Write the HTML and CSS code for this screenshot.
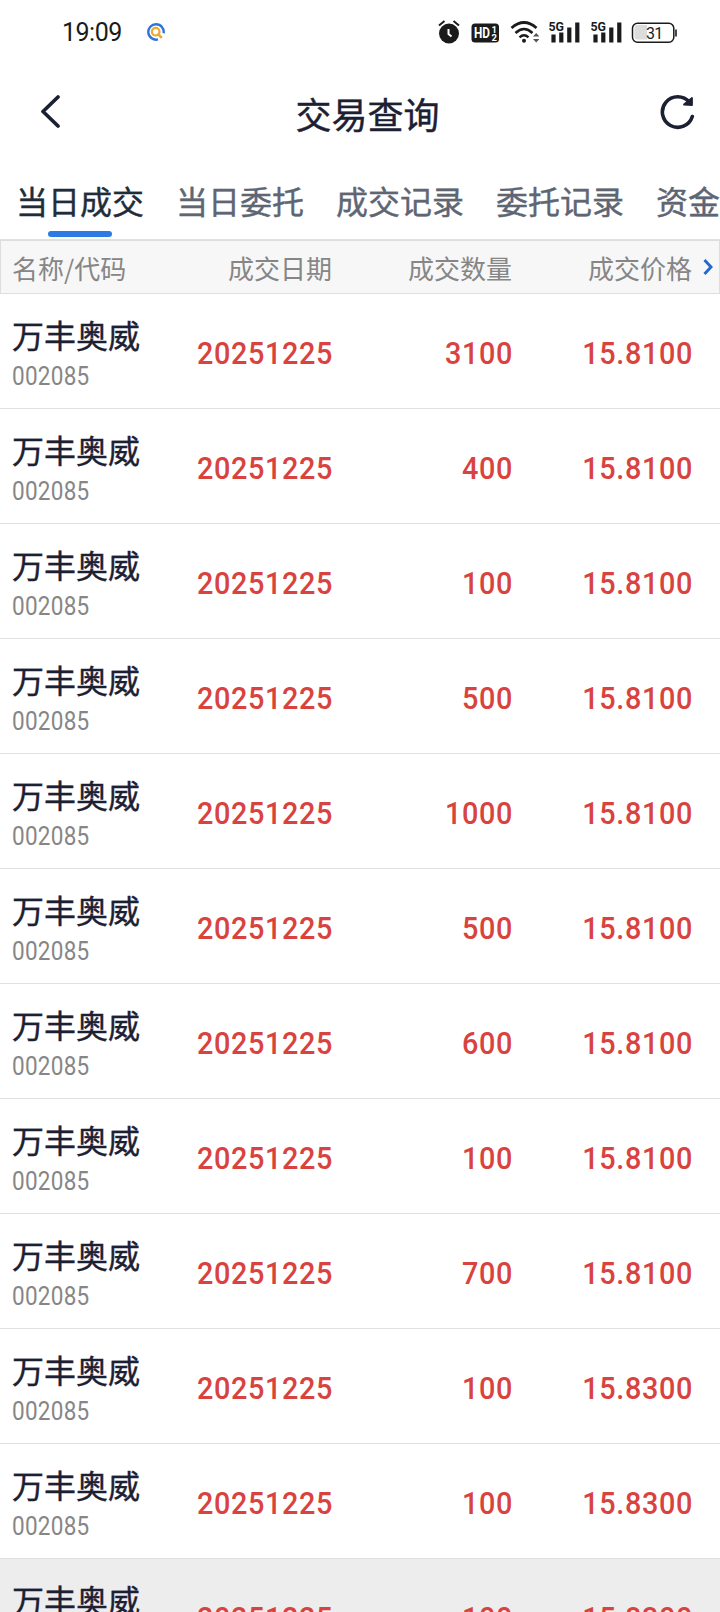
FILE: index.html
```html
<!DOCTYPE html>
<html lang="zh-CN">
<head>
    <meta charset="UTF-8">
    <meta name="viewport" content="width=device-width, initial-scale=1.0">
    <title>交易查询</title>
    <link rel="stylesheet" href="styles.css">
</head>
<body>
    <div class="status-bar">
        <div class="clock">19:09</div>
        <svg class="app-icon" width="18" height="18" viewBox="0 0 18 18" fill="none">
            <path d="M16.6 10.2A7.7 7.7 0 1 0 11 16.4" stroke="#2a74dc" stroke-width="2.4"/>
            <circle cx="8.7" cy="8.7" r="3.8" stroke="#eda932" stroke-width="2.2"/>
            <path d="M10.5 10.5L14.8 14.8" stroke="#eda932" stroke-width="2.6"/>
        </svg>
        <div class="status-icons">
            <svg width="260" height="32" viewBox="0 0 260 32" fill="none">
                <!-- alarm -->
                <circle cx="20" cy="17.5" r="10" fill="#1b1b1b"/>
                <path d="M10 9.5L15.5 5M24.5 5L30 9.5" stroke="#1b1b1b" stroke-width="2"/>
                <path d="M19.5 13V18L22.5 20.5" stroke="#fff" stroke-width="2"/>
                <!-- HD badge -->
                <rect x="42.5" y="7.5" width="27.5" height="19" rx="3.5" fill="#1b1b1b"/>
                <text class="hd" x="45" y="22.3" textLength="16" lengthAdjust="spacingAndGlyphs">HD</text>
                <text class="hd-small" x="62.5" y="16.5">1</text>
                <text class="hd-small" x="62.5" y="25">2</text>
                <!-- wifi -->
                <path d="M82.5 12Q95 1 107.5 12" stroke="#1b1b1b" stroke-width="2.8"/>
                <path d="M86.5 17Q95 9 103.5 17" stroke="#1b1b1b" stroke-width="2.6"/>
                <path d="M90.5 21.3Q95 17.3 99.5 21.3" stroke="#1b1b1b" stroke-width="2.4"/>
                <circle cx="95" cy="24.8" r="2" fill="#1b1b1b"/>
                <path d="M104 20.5L107.2 17L110.4 20.5ZM104 23L107.2 26.5L110.4 23Z" fill="#555"/>
                <!-- signal 1 -->
                <text class="net" x="119.5" y="14.5" textLength="15.5" lengthAdjust="spacingAndGlyphs">5G</text>
                <path d="M124.5 18.5V26.5M132.3 16.5V26.5M140.3 11.5V26.5M148.3 6.5V26.5" stroke="#1b1b1b" stroke-width="4.2"/>
                <!-- signal 2 -->
                <text class="net" x="161.5" y="14.5" textLength="15.5" lengthAdjust="spacingAndGlyphs">5G</text>
                <path d="M166.5 18.5V26.5M174.3 16.5V26.5M182.3 11.5V26.5M190.3 6.5V26.5" stroke="#1b1b1b" stroke-width="4.2"/>
                <!-- battery -->
                <path d="M208 9H218V23.5H208Q205.5 23.5 205.5 20.5V12Q205.5 9 208 9Z" fill="#dcdcdc"/>
                <rect x="203.5" y="7.2" width="41.3" height="19" rx="5" stroke="#1b1b1b" stroke-width="1.5"/>
                <path d="M247 13.5V20.5" stroke="#1b1b1b" stroke-width="1.6"/>
                <text class="battery" x="217" y="22.5">31</text>
            </svg>
        </div>
    </div>

    <div class="header">
        <svg class="back" width="20" height="34" viewBox="0 0 20 34" fill="none">
            <path d="M17 2L2 16.5L17 31" stroke="#1c2033" stroke-width="3.7" stroke-linecap="round" stroke-linejoin="round"/>
        </svg>
        <h1>交易查询</h1>
        <svg class="refresh" width="36" height="36" viewBox="0 0 36 36" fill="none">
            <path d="M32.3 22.5A15.3 15.3 0 1 1 29.5 8.3" stroke="#1c2033" stroke-width="3.6" stroke-linecap="round"/>
            <path d="M32 4V11L24 10.5Z" fill="#1c2033" stroke="#1c2033" stroke-width="1.8" stroke-linejoin="round"/>
        </svg>
    </div>

    <div class="tabs">
        <div class="tab active">当日成交</div>
        <div class="tab">当日委托</div>
        <div class="tab">成交记录</div>
        <div class="tab">委托记录</div>
        <div class="tab">资金</div>
    </div>

    <div class="table-head">
        <div>名称/代码</div>
        <div>成交日期</div>
        <div>成交数量</div>
        <div>成交价格</div>
        <svg class="more" width="11" height="18" viewBox="0 0 11 18" fill="none">
            <path d="M1.5 2L8 9L1.5 16" stroke="#2168cf" stroke-width="2.9"/>
        </svg>
    </div>

    <div class="list">
        <div class="row">
            <div class="stock"><div class="name">万丰奥威</div><div class="code">002085</div></div>
            <div class="num">20251225</div>
            <div class="num">3100</div>
            <div class="num">15.8100</div>
        </div>
        <div class="row">
            <div class="stock"><div class="name">万丰奥威</div><div class="code">002085</div></div>
            <div class="num">20251225</div>
            <div class="num">400</div>
            <div class="num">15.8100</div>
        </div>
        <div class="row">
            <div class="stock"><div class="name">万丰奥威</div><div class="code">002085</div></div>
            <div class="num">20251225</div>
            <div class="num">100</div>
            <div class="num">15.8100</div>
        </div>
        <div class="row">
            <div class="stock"><div class="name">万丰奥威</div><div class="code">002085</div></div>
            <div class="num">20251225</div>
            <div class="num">500</div>
            <div class="num">15.8100</div>
        </div>
        <div class="row">
            <div class="stock"><div class="name">万丰奥威</div><div class="code">002085</div></div>
            <div class="num">20251225</div>
            <div class="num">1000</div>
            <div class="num">15.8100</div>
        </div>
        <div class="row">
            <div class="stock"><div class="name">万丰奥威</div><div class="code">002085</div></div>
            <div class="num">20251225</div>
            <div class="num">500</div>
            <div class="num">15.8100</div>
        </div>
        <div class="row">
            <div class="stock"><div class="name">万丰奥威</div><div class="code">002085</div></div>
            <div class="num">20251225</div>
            <div class="num">600</div>
            <div class="num">15.8100</div>
        </div>
        <div class="row">
            <div class="stock"><div class="name">万丰奥威</div><div class="code">002085</div></div>
            <div class="num">20251225</div>
            <div class="num">100</div>
            <div class="num">15.8100</div>
        </div>
        <div class="row">
            <div class="stock"><div class="name">万丰奥威</div><div class="code">002085</div></div>
            <div class="num">20251225</div>
            <div class="num">700</div>
            <div class="num">15.8100</div>
        </div>
        <div class="row">
            <div class="stock"><div class="name">万丰奥威</div><div class="code">002085</div></div>
            <div class="num">20251225</div>
            <div class="num">100</div>
            <div class="num">15.8300</div>
        </div>
        <div class="row">
            <div class="stock"><div class="name">万丰奥威</div><div class="code">002085</div></div>
            <div class="num">20251225</div>
            <div class="num">100</div>
            <div class="num">15.8300</div>
        </div>
        <div class="row pressed">
            <div class="stock"><div class="name">万丰奥威</div><div class="code">002085</div></div>
            <div class="num">20251225</div>
            <div class="num">100</div>
            <div class="num">15.8300</div>
        </div>
    </div>
</body>
</html>
```
FILE: styles.css
```css
* {
    box-sizing: border-box;
}
body {
    margin: 0;
    width: 720px;
    height: 1612px;
    overflow: hidden;
    background-color: #fff;
    color: #1c2033;
    font-family: "Noto Sans CJK SC", sans-serif;
}
.status-bar {
    height: 64px;
    display: flex;
    align-items: center;
    padding-left: 62px;
}
.clock {
    width: 85px;
    padding-top: 2px;
    font-family: Roboto, sans-serif;
    font-size: 25px;
    line-height: 30px;
    letter-spacing: -0.5px;
    color: #1b1b1b;
}
.status-icons {
    margin-left: 264px;
    height: 32px;
}
.status-icons text {
    font-family: Roboto, sans-serif;
    fill: #1b1b1b;
}
.status-icons .hd {
    font-size: 15px;
    font-weight: bold;
    fill: #fff;
}
.status-icons .hd-small {
    font-size: 9.5px;
    font-weight: bold;
    fill: #fff;
}
.status-icons .net {
    font-size: 13.5px;
    font-weight: bold;
}
.status-icons .battery {
    font-size: 16px;
    letter-spacing: -0.8px;
}
.header {
    height: 96px;
    display: flex;
    align-items: center;
    justify-content: space-between;
    padding: 0 24px 0 41px;
}
.header h1, .tab, .name {
    font-weight: 400;
    -webkit-text-stroke: 0.4px;
}
.header h1 {
    margin: 2px 0 0 14px;
    font-size: 36px;
    line-height: 48px;
}
.tabs {
    height: 80px;
    display: flex;
    gap: 32px;
    padding-left: 16px;
    overflow: hidden;
    border-bottom: 1px solid #e0e0e0;
}
.tab {
    flex: none;
    width: 128px;
    padding-top: 16px;
    font-size: 32px;
    line-height: 48px;
    color: #5e6673;
}
.tab:last-child {
    width: auto;
}
.tab.active {
    color: #1f2d3a;
}
.tab.active::after {
    content: "";
    display: block;
    width: 64px;
    height: 6px;
    margin: 7px auto 0;
    border-radius: 3px;
    background-color: #2c7be5;
}
.table-head, .row {
    display: grid;
    grid-template-columns: 153px 180px 180px 180px 27px;
    align-items: center;
    text-align: right;
}
.table-head {
    height: 54px;
    grid-template-columns: 151px 180px 180px 180px 27px;
    background-color: #f7f7f7;
    border: 1px solid #dedede;
    font-size: 26px;
    color: #868686;
}
.table-head div:first-child {
    padding-left: 11px;
    text-align: left;
    white-space: nowrap;
}
.more {
    margin-left: 11px;
}
.row {
    height: 115px;
    border-bottom: 1px solid #e0e0e0;
}
.row.pressed {
    background-color: #ededed;
}
.stock {
    padding: 9px 0 0 12px;
    text-align: left;
}
.name {
    font-size: 32px;
    line-height: 40px;
}
/* digits are squeezed a little to look like a DIN face */
.code {
    margin-top: 2px;
    font-family: Roboto, sans-serif;
    font-size: 25px;
    line-height: 42px;
    letter-spacing: 0.3px;
    color: #868686;
    transform: scaleX(0.9);
    transform-origin: left;
}
.num {
    padding-top: 4px;
    font-family: Roboto, sans-serif;
    font-size: 32px;
    font-weight: 500;
    letter-spacing: 0.7px;
    color: #d9433f;
    transform: scaleX(0.9);
    transform-origin: right;
}
```
